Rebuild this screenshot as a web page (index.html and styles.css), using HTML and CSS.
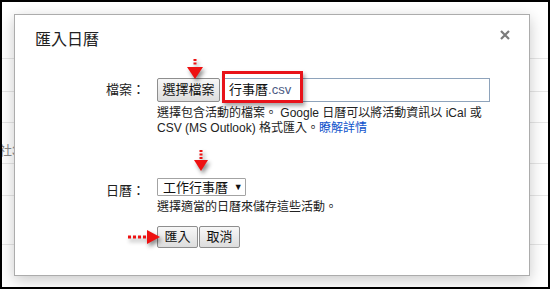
FILE: index.html
```html
<!DOCTYPE html>
<html lang="zh-Hant">
<head>
    <meta charset="UTF-8">
    <title>匯入日曆</title>
    <link rel="stylesheet" href="styles.css">
</head>
<body>
    <div class="screen">
        <!-- calendar grid behind the dialog -->
        <div class="calendar-bg">
            <div class="bg-row r1"></div>
            <div class="bg-row r2"></div>
            <div class="bg-row r3"></div>
            <div class="bg-row r4"><span class="bg-text">社3</span></div>
            <div class="bg-row r5"></div>
            <div class="bg-row r6"></div>
        </div>

        <div class="dialog">
            <div class="dialog-title">匯入日曆</div>
            <svg class="close" width="10" height="10" viewBox="0 0 10 10">
                <path d="M1 1 L9 9 M9 1 L1 9" stroke="#7b7b7b" stroke-width="2.2"/>
            </svg>

            <div class="form">
                <div class="label file-label">檔案：</div>
                <div class="field">
                    <div class="file-row">
                        <button class="btn choose">選擇檔案</button>
                        <div class="file-name">行事曆<span class="ext">.csv</span></div>
                        <div class="mark-box"></div>
                        <svg class="arrow down arrow-file" width="16" height="22" viewBox="0 0 16 22">
                            <rect x="6.5" y="1" width="3" height="2"/>
                            <rect x="6.5" y="4.5" width="3" height="2"/>
                            <path d="M0 9 L16 9 L8 21 Z"/>
                        </svg>
                    </div>
                    <div class="help">選擇包含活動的檔案。 Google 日曆可以將活動資訊以 iCal 或<br>CSV (MS Outlook) 格式匯入。<a href="#">瞭解詳情</a></div>
                </div>

                <div class="label cal-label">日曆：</div>
                <div class="field">
                    <div class="select-row">
                        <div class="select">工作行事曆 <span class="caret">▼</span></div>
                        <svg class="arrow down arrow-cal" width="14" height="22" viewBox="0 0 14 22">
                            <rect x="5.5" y="0" width="3" height="2"/>
                            <rect x="5.5" y="3.5" width="3" height="2"/>
                            <rect x="5.5" y="7" width="3" height="2"/>
                            <path d="M0 10 L14 10 L7 21 Z"/>
                        </svg>
                    </div>
                    <div class="help">選擇適當的日曆來儲存這些活動。</div>
                </div>

                <div></div>
                <div class="actions">
                    <button class="btn">匯入</button>
                    <button class="btn">取消</button>
                    <svg class="arrow arrow-ok" width="34" height="14" viewBox="0 0 34 14">
                        <rect x="1" y="5.5" width="3" height="3"/>
                        <rect x="6" y="5.5" width="3" height="3"/>
                        <rect x="11" y="5.5" width="3" height="3"/>
                        <rect x="16" y="5.5" width="3" height="3"/>
                        <path d="M20 0 L33 7 L20 14 Z"/>
                    </svg>
                </div>
            </div>
        </div>
    </div>
</body>
</html>
```

FILE: styles.css
```css
body {
    margin: 0;
    font-family: "Liberation Sans", "Noto Sans CJK TC", sans-serif;
    color: #111;
}

.screen {
    position: relative;
    width: 550px;
    height: 289px;
    border: 2px solid #000;
    box-sizing: border-box;
    background: #fff;
    overflow: hidden;
}

.bg-row {
    border-bottom: 1px solid #e6e6e6;
}

.r1 { height: 56px; }
.r2 { height: 32px; }
.r3 { height: 30px; }
.r4 { height: 40px; }
.r5 { height: 31px; }
.r6 { height: 48px; }

.bg-text {
    display: block;
    padding-top: 20px;
    margin-left: -3px;
    font-size: 13px;
    line-height: 15px;
    color: #888;
}

.dialog {
    position: absolute;
    left: 12px;
    top: 12px;
    width: 516px;
    height: 262px;
    box-sizing: border-box;
    border: 1px solid #acacac;
    background: #fff;
    padding: 15px 20px;
    box-shadow: 0 4px 14px rgba(0, 0, 0, 0.22);
}

.dialog-title {
    font-size: 16px;
    line-height: 20px;
    color: #222;
}

.close {
    position: absolute;
    top: 15px;
    right: 19px;
}

.form {
    display: grid;
    grid-template-columns: 110px 1fr;
    column-gap: 12px;
    margin-top: 28px;
}

.label {
    text-align: right;
    font-size: 13px;
    line-height: 24px;
    color: #222;
}

.cal-label {
    margin-top: 42px;
    padding-top: 1px;
}

.field {
    font-size: 12px;
}

.file-row {
    position: relative;
    display: flex;
    gap: 4px;
    height: 24px;
}

.btn {
    font-family: inherit;
    font-size: 13px;
    color: #111;
    border: 1px solid #8e8e8e;
    border-radius: 2px;
    background: linear-gradient(#f7f7f7, #dddddd);
    padding: 0 7px;
    margin: 0;
    line-height: 20px;
    cursor: pointer;
}

.choose {
    width: 63px;
    padding: 0;
}

.file-name {
    width: 266px;
    box-sizing: border-box;
    border: 1px solid #8ea3bb;
    padding: 0 4px;
    font-size: 13px;
    line-height: 22px;
    color: #111;
}

.ext {
    font-family: "Liberation Sans", sans-serif;
    color: #4b5a83;
}

.mark-box {
    position: absolute;
    left: 65px;
    top: -7px;
    width: 81px;
    height: 32px;
    box-sizing: border-box;
    border: 3px solid #e8131a;
    box-shadow: 2px 3px 4px rgba(0, 0, 0, 0.35);
}

.help {
    margin-top: 4px;
    line-height: 15px;
    color: #222;
}

.help a {
    color: #1155cc;
    text-decoration: none;
}

.select-row {
    position: relative;
    margin-top: 42px;
    height: 18px;
}

.select {
    display: inline-block;
    width: 89px;
    height: 18px;
    box-sizing: border-box;
    border: 1px solid #a3a3a3;
    border-radius: 1px;
    padding-left: 5px;
    font-size: 13px;
    line-height: 16px;
    color: #111;
}

.caret {
    font-size: 9px;
    vertical-align: 2px;
    margin-left: 2px;
}

.actions {
    position: relative;
    display: flex;
    gap: 1px;
    margin-top: 11px;
    height: 22px;
}

.actions .btn {
    width: 41px;
    padding: 0;
    line-height: 20px;
}

.arrow {
    position: absolute;
    fill: #ee1111;
    filter: drop-shadow(2px 3px 2px rgba(0, 0, 0, 0.45));
}

.arrow-file {
    left: 30px;
    top: -20px;
}

.arrow-cal {
    left: 37px;
    top: -28px;
}

.arrow-ok {
    left: -30px;
    top: 4px;
}
```
